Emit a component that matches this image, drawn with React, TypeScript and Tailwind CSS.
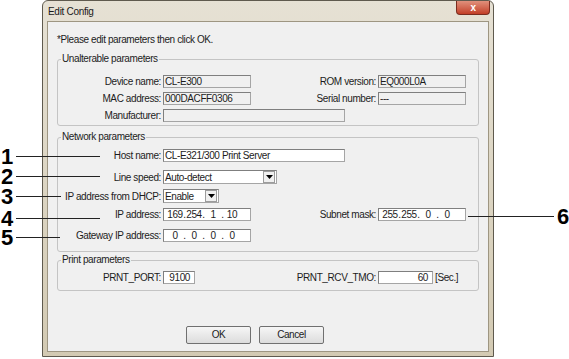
import React from 'react'

const font = { fontFamily: '"Liberation Sans", Arial, sans-serif' }

const callouts = [
  { n: '1', y: 157, to: 100 },
  { n: '2', y: 177, to: 100 },
  { n: '3', y: 197, to: 61 },
  { n: '4', y: 219, to: 100 },
  { n: '5', y: 238, to: 60 },
]

function Field({ value, w, disabled, right }: { value?: string; w: string; disabled?: boolean; right?: boolean }) {
  return (
    <div
      className={`${w} h-[13px] border border-[#a5a5a5] border-t-[#7f7f7f] border-l-[#7f7f7f] ${disabled ? 'bg-[#f0f0f0]' : 'bg-white'} ${right ? 'text-right pr-[4px]' : 'pl-[1px]'} leading-[11px] overflow-hidden whitespace-nowrap`}
    >
      {value}
    </div>
  )
}

function IpField({ parts }: { parts: string[] }) {
  return (
    <div className="w-[88px] h-[13px] border border-[#a5a5a5] border-t-[#7f7f7f] border-l-[#7f7f7f] bg-white flex items-center pl-[3px] leading-[11px] whitespace-nowrap">
      {parts.map((p, i) => (
        <React.Fragment key={i}>
          <span className="w-[16px] text-center">{p}</span>
          {i < 3 && <span className="w-[3px] text-center">.</span>}
        </React.Fragment>
      ))}
    </div>
  )
}

function Select({ value, w }: { value: string; w: string }) {
  return (
    <div className={`${w} h-[14px] border border-[#a5a5a5] border-t-[#7f7f7f] border-l-[#7f7f7f] bg-white flex items-center`}>
      <span className="flex-1 pl-[1px] leading-[11px]">{value}</span>
      <div className="w-[12px] h-[12px] mr-[1px] bg-[#f0f0f0] border border-[#9c9c9c] flex items-center justify-center">
        <svg width="7" height="4" viewBox="0 0 7 4">
          <path d="M0 0h7L3.5 4z" fill="#000" />
        </svg>
      </div>
    </div>
  )
}

function Label({ text, w }: { text: string; w: string }) {
  return <div className={`${w} text-right pr-[2px] whitespace-nowrap`}>{text}</div>
}

function Group({ title, className, children }: { title: string; className: string; children: React.ReactNode }) {
  return (
    <fieldset className={`w-[422px] border border-[#c4c4c4] rounded-[3px] ${className}`}>
      <legend className="ml-[3px] px-[1px] leading-[12px]">{title}</legend>
      {children}
    </fieldset>
  )
}

export default function App() {
  return (
    <div className="relative w-[569px] h-[359px] bg-white overflow-hidden text-[10px] tracking-[-0.4px] text-[#1c1c1c]" style={font}>
      <div className="ml-[42px] w-[452px] h-[357px] border border-[#5f5a4e] rounded-t-[6px] bg-gradient-to-b from-[#e6e1d4] to-[#d3cab3] px-[4px] pb-[4px] flex flex-col">
        <div className="h-[20px] flex items-center justify-between pl-[1px]">
          <span className="text-[10px] tracking-[-0.3px] text-[#1a1a1a]">Edit Config</span>
          <div className="self-start w-[34px] h-[14px] -mr-[1px] rounded-b-[4px] border border-t-0 border-[#7a2c1f] bg-gradient-to-b from-[#e0907c] to-[#c23d26] flex items-center justify-center">
            <span className="text-white font-bold text-[10px] leading-none">x</span>
          </div>
        </div>
        <div className="flex-1 border border-[#9e9682] bg-[#f0f0f0] pl-[9px] pt-[12px] flex flex-col">
          <div className="leading-[12px]">*Please edit parameters then click OK.</div>

          <Group title="Unalterable parameters" className="mt-[7px] pt-[10px] pb-[3px]">
            <div className="flex flex-col gap-[4px]">
              <div className="flex items-center h-[13px]">
                <Label text="Device name:" w="w-[105px]" />
                <Field value="CL-E300" w="w-[88px]" disabled />
                <Label text="ROM version:" w="w-[127px]" />
                <Field value="EQ000L0A" w="w-[88px]" disabled />
              </div>
              <div className="flex items-center h-[13px]">
                <Label text="MAC address:" w="w-[105px]" />
                <Field value="000DACFF0306" w="w-[88px]" disabled />
                <Label text="Serial number:" w="w-[127px]" />
                <Field value="---" w="w-[88px]" disabled />
              </div>
              <div className="flex items-center h-[13px]">
                <Label text="Manufacturer:" w="w-[105px]" />
                <Field value="" w="w-[182px]" disabled />
              </div>
            </div>
          </Group>

          <Group title="Network parameters" className="mt-[5px] pt-[6px] pb-[9px]">
            <div className="flex flex-col">
              <div className="flex items-center h-[13px]">
                <Label text="Host name:" w="w-[105px]" />
                <Field value="CL-E321/300 Print Server" w="w-[182px]" />
              </div>
              <div className="flex items-center h-[14px] mt-[8px]">
                <Label text="Line speed:" w="w-[105px]" />
                <Select value="Auto-detect" w="w-[114px]" />
              </div>
              <div className="flex items-center h-[14px] mt-[5px]">
                <Label text="IP address from DHCP:" w="w-[105px]" />
                <Select value="Enable" w="w-[56px]" />
              </div>
              <div className="flex items-center h-[13px] mt-[5px]">
                <Label text="IP address:" w="w-[105px]" />
                <IpField parts={['169', '254', '1', '10']} />
                <Label text="Subnet mask:" w="w-[127px]" />
                <IpField parts={['255', '255', '0', '0']} />
              </div>
              <div className="flex items-center h-[13px] mt-[8px]">
                <Label text="Gateway IP address:" w="w-[105px]" />
                <IpField parts={['0', '0', '0', '0']} />
              </div>
            </div>
          </Group>

          <Group title="Print parameters" className="mt-[2px] pt-[5px] pb-[6px]">
            <div className="flex items-center h-[13px]">
              <Label text="PRNT_PORT:" w="w-[105px]" />
              <Field value="9100" w="w-[32px]" right />
              <Label text="PRNT_RCV_TMO:" w="w-[183px]" />
              <Field value="60" w="w-[55px]" right />
              <span className="pl-[2px]">[Sec.]</span>
            </div>
          </Group>

          <div className="mt-[35px] pl-[129px] flex gap-[8px]">
            <button className="w-[65px] h-[18px] border border-[#707070] rounded-[2px] bg-gradient-to-b from-[#f6f6f6] to-[#dcdcdc] leading-[16px]">OK</button>
            <button className="w-[65px] h-[18px] border border-[#707070] rounded-[2px] bg-gradient-to-b from-[#f6f6f6] to-[#dcdcdc] leading-[16px]">Cancel</button>
          </div>
        </div>
      </div>

      {callouts.map((c) => (
        <div key={c.n} className="absolute left-0 flex items-center h-[17px]" style={{ top: c.y - 9 }}>
          <span className="w-[16px] text-[22px] font-bold leading-[17px] tracking-normal text-black pl-[1px]">{c.n}</span>
          <div className="h-px bg-[#222]" style={{ width: c.to - 16 }} />
        </div>
      ))}
      <div className="absolute left-[468px] top-[208px] flex items-center h-[17px]">
        <div className="w-[86px] h-px bg-[#222]" />
        <span className="pl-[3px] text-[22px] font-bold leading-[17px] tracking-normal text-black">6</span>
      </div>
    </div>
  )
}
